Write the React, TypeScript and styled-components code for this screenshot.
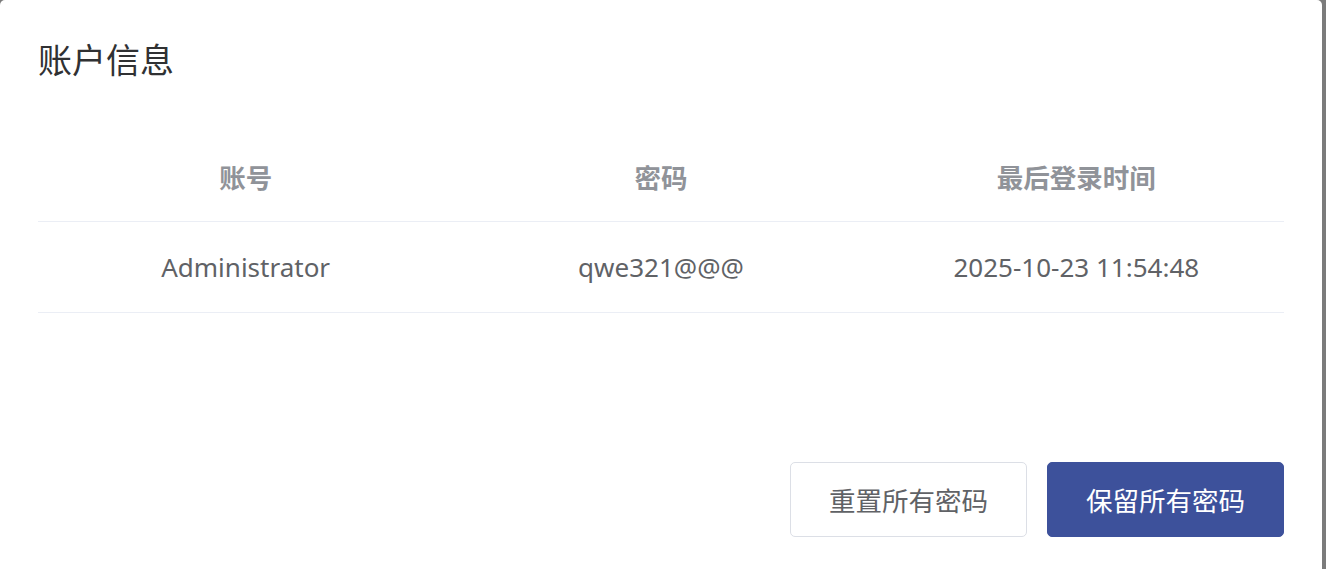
import React from "react";
import styled, { createGlobalStyle } from "styled-components";

const GlobalStyle = createGlobalStyle`
    html, body {
        margin: 0;
        padding: 0;
        background: #7b7b7b;
        overflow: hidden;
    }
    body {
        font-family: "Noto Sans", "Noto Sans CJK SC", sans-serif;
    }
`;

interface Account {
    name: string;
    password: string;
    lastLogin: string;
}

const accounts: Account[] = [
    { name: "Administrator", password: "qwe321@@@", lastLogin: "2025-10-23 11:54:48" },
];

const App: React.FC = () => {
    return (
        <>
            <GlobalStyle />
            <DialogStyled>
                <h2 className="title">账户信息</h2>
                <Table>
                    <Row $head>
                        <Cell>账号</Cell>
                        <Cell>密码</Cell>
                        <Cell>最后登录时间</Cell>
                    </Row>
                    {accounts.map((a) => (
                        <Row key={a.name}>
                            <Cell>{a.name}</Cell>
                            <Cell>{a.password}</Cell>
                            <Cell>{a.lastLogin}</Cell>
                        </Row>
                    ))}
                </Table>
                <Footer>
                    <Button>重置所有密码</Button>
                    <Button $primary>保留所有密码</Button>
                </Footer>
            </DialogStyled>
        </>
    );
};

const DialogStyled = styled.div`
    width: 1322px;
    height: 100vh;
    box-sizing: border-box;
    background: #ffffff;
    border-radius: 5px 5px 0 0;
    padding: 38px 38px 0;
    .title {
        margin: 0;
        font-size: 34px;
        line-height: 42px;
        font-weight: 400;
        color: #303133;
        font-family: "Noto Sans CJK SC", sans-serif;
    }
`;

const Table = styled.div`
    margin-top: 51px;
    display: flex;
    flex-direction: column;
`;

const Row = styled.div<{ $head?: boolean }>`
    display: grid;
    grid-template-columns: 1fr 1fr 1fr;
    height: 90px;
    align-items: center;
    border-bottom: 1px solid #ebeef5;
    font-size: ${(p) => (p.$head ? "26.5px" : "26px")};
    font-weight: ${(p) => (p.$head ? 700 : 400)};
    color: ${(p) => (p.$head ? "#909399" : "#606266")};
    font-family: ${(p) => (p.$head ? `"Noto Sans CJK SC", sans-serif` : `"Noto Sans", "Noto Sans CJK SC", sans-serif`)};
`;

const Cell = styled.div`
    text-align: center;
`;

const Footer = styled.div`
    display: flex;
    justify-content: flex-end;
    gap: 20px;
    margin-top: 149px;
`;

const Button = styled.button<{ $primary?: boolean }>`
    width: 237px;
    height: 75px;
    box-sizing: border-box;
    border-radius: 5px;
    border: 1px solid ${(p) => (p.$primary ? "#3d519b" : "#dcdfe6")};
    background: ${(p) => (p.$primary ? "#3d519b" : "#ffffff")};
    color: ${(p) => (p.$primary ? "#ffffff" : "#606266")};
    font-size: 26.5px;
    font-family: "Noto Sans CJK SC", sans-serif;
    cursor: pointer;
    padding: 0;
`;

export default App;
